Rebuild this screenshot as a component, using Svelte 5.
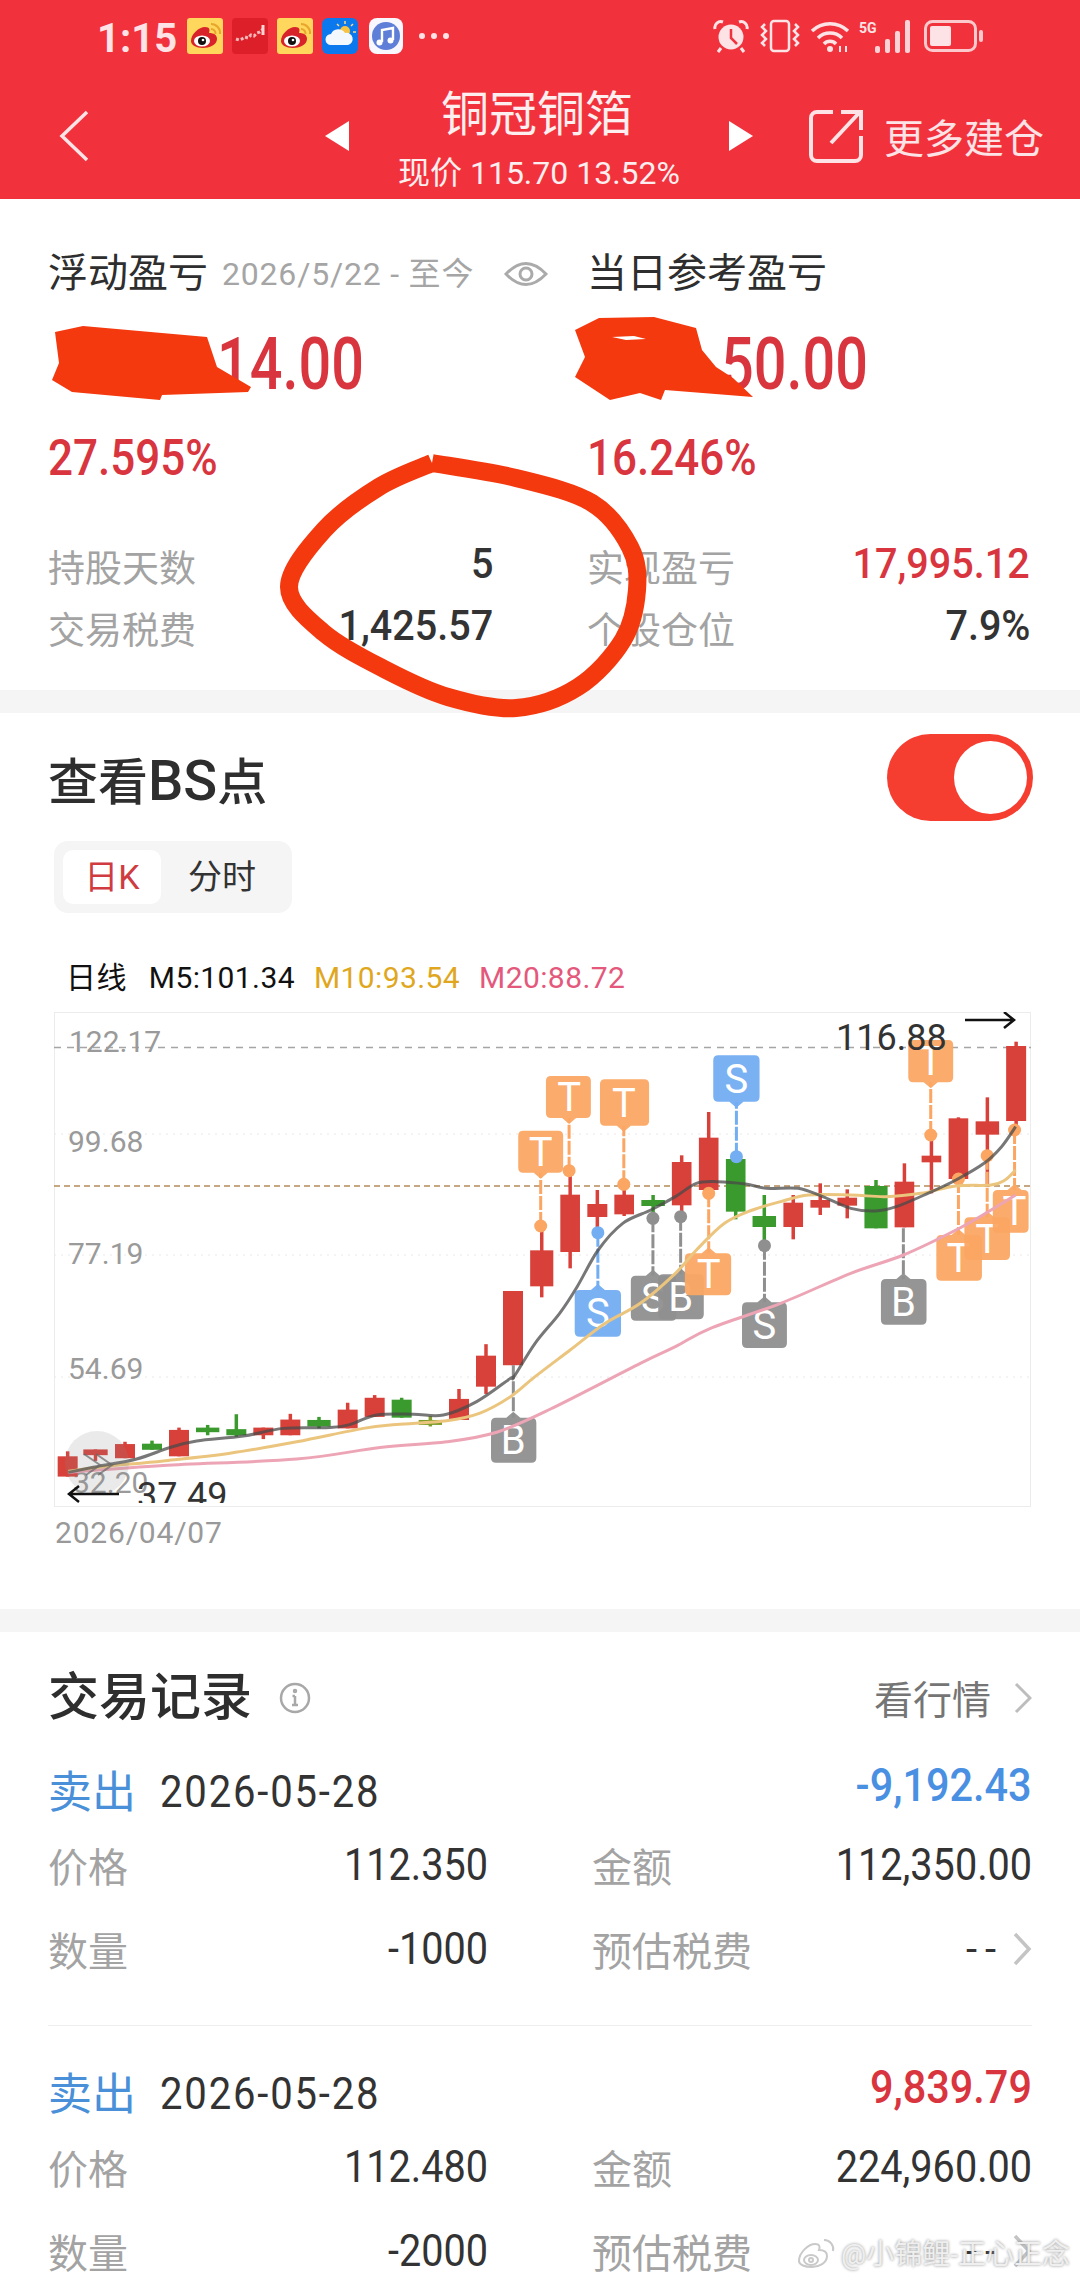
<script>
  // crop-space helpers: candle positions were measured on two zoomed crops
  const ax = (v) => 30 + v / 3;
  const ay = (v) => 950 + v / 2.613;
  const bx = (v) => 500 + v / 2.851;
  const by = (v) => 980 + v / 3;

  const RED = "#d8403a";
  const GREEN = "#3b9a2e";

  // [left, right, top, bottom, wickTop, wickBottom, colour]
  const leftCandles = [
    [83, 143, 1323, 1376, 1310, 1376, RED],
    [160, 233, 1305, 1320, 1305, 1335, RED],
    [255, 315, 1291, 1328, 1285, 1328, RED],
    [336, 396, 1290, 1306, 1282, 1306, GREEN],
    [417, 477, 1254, 1323, 1248, 1323, RED],
    [498, 568, 1248, 1260, 1241, 1268, GREEN],
    [589, 649, 1252, 1268, 1213, 1272, GREEN],
    [670, 730, 1248, 1268, 1248, 1278, RED],
    [751, 811, 1227, 1268, 1212, 1268, RED],
    [832, 902, 1228, 1245, 1220, 1250, GREEN],
    [923, 983, 1201, 1250, 1183, 1250, RED],
    [1004, 1064, 1170, 1220, 1163, 1220, RED],
    [1085, 1145, 1175, 1222, 1170, 1222, GREEN],
    [1166, 1236, 1228, 1241, 1218, 1245, "#7f9e2c"],
    [1257, 1317, 1173, 1228, 1147, 1228, RED],
    [1338, 1398, 1060, 1141, 1030, 1160, RED],
    [1419, 1479, 891, 1085, 891, 1085, RED],
  ].map((c) => ({ x1: ax(c[0]), x2: ax(c[1]), y1: ay(c[2]), y2: ay(c[3]), w1: ay(c[4]), w2: ay(c[5]), color: c[6] }));

  const rightCandles = [
    [86, 152, 811, 919, 740, 952, RED],
    [172, 228, 644, 816, 580, 865, RED],
    [249, 306, 672, 711, 630, 750, RED],
    [326, 382, 644, 703, 630, 708, RED],
    [403, 470, 660, 678, 645, 700, GREEN],
    [490, 546, 546, 676, 526, 700, RED],
    [567, 623, 473, 630, 396, 650, RED],
    [644, 700, 537, 695, 530, 718, GREEN],
    [720, 787, 708, 741, 645, 790, GREEN],
    [808, 864, 668, 741, 645, 778, RED],
    [885, 941, 660, 683, 610, 705, RED],
    [962, 1018, 653, 677, 628, 715, RED],
    [1039, 1105, 618, 745, 600, 745, GREEN],
    [1125, 1181, 605, 742, 550, 742, RED],
    [1202, 1258, 527, 547, 470, 640, RED],
    [1279, 1335, 415, 597, 412, 597, RED],
    [1356, 1423, 424, 464, 352, 620, RED],
    [1443, 1500, 198, 423, 185, 440, RED],
  ].map((c) => ({ x1: bx(c[0]), x2: bx(c[1]), y1: by(c[2]), y2: by(c[3]), w1: by(c[4]), w2: by(c[5]), color: c[6] }));

  const candles = [...leftCandles, ...rightCandles];

  const ORANGE = "#fba663";
  const BLUE = "#73adf2";
  const GRAY = "#8f8f8f";

  // [left, right, top, bottom, letter, colour, stemX, stemEndY, hasDot]
  const markers = [
    [52, 180, 452, 578, "T", ORANGE, 116, 738, true],
    [131, 259, 288, 414, "T", ORANGE, 197, 572, true],
    [285, 425, 298, 437, "T", ORANGE, 353, 613, true],
    [608, 740, 226, 365, "S", BLUE, 674, 530, true],
    [213, 345, 930, 1070, "S", BLUE, 279, 758, true],
    [373, 503, 887, 1022, "S", GRAY, 436, 715, true],
    [451, 581, 883, 1018, "B", GRAY, 515, 710, true],
    [527, 659, 820, 946, "T", ORANGE, 595, 640, true],
    [690, 818, 967, 1104, "S", GRAY, 754, 797, true],
    [1086, 1216, 897, 1034, "B", GRAY, 1150, 745, false],
    [1164, 1292, 180, 307, "T", ORANGE, 1228, 465, true],
    [1244, 1374, 765, 902, "T", ORANGE, 1307, 597, true],
    [1324, 1454, 712, 840, "T", ORANGE, 1389, 527, true],
    [1405, 1507, 630, 758, "T", ORANGE, 1467, 450, true],
  ].map((m) => ({
    x1: bx(m[0]), x2: bx(m[1]), y1: by(m[2]), y2: by(m[3]), letter: m[4], color: m[5],
    sx: bx(m[6]), sy: by(m[7]), dot: m[8],
  }));
  // the first B sits on the left crop
  markers.push({ x1: ax(1383), x2: ax(1519), y1: ay(1222), y2: ay(1340), letter: "B", color: GRAY, sx: ax(1450), sy: ay(1085), dot: false });

  function bubble(m) {
    const r = 5;
    const up = m.sy < m.y1; // tip points at the candle
    const top = up ? `L${m.sx - 7} ${m.y1} L${m.sx} ${m.y1 - 6} L${m.sx + 7} ${m.y1} ` : "";
    const bottom = up ? "" : `L${m.sx + 7} ${m.y2} L${m.sx} ${m.y2 + 6} L${m.sx - 7} ${m.y2} `;
    return `M${m.x1 + r} ${m.y1} ${top}L${m.x2 - r} ${m.y1} Q${m.x2} ${m.y1} ${m.x2} ${m.y1 + r} L${m.x2} ${m.y2 - r} Q${m.x2} ${m.y2} ${m.x2 - r} ${m.y2} ` +
      `${bottom}L${m.x1 + r} ${m.y2} Q${m.x1} ${m.y2} ${m.x1} ${m.y2 - r} L${m.x1} ${m.y1 + r} Q${m.x1} ${m.y1} ${m.x1 + r} ${m.y1} Z`;
  }

  function smooth(pts) {
    let d = `M${pts[0][0]} ${pts[0][1]}`;
    for (let i = 0; i < pts.length - 1; i++) {
      const p0 = pts[i - 1] || pts[i];
      const p1 = pts[i];
      const p2 = pts[i + 1];
      const p3 = pts[i + 2] || p2;
      d += ` C${p1[0] + (p2[0] - p0[0]) / 6} ${p1[1] + (p2[1] - p0[1]) / 6} ${p2[0] - (p3[0] - p1[0]) / 6} ${p2[1] - (p3[1] - p1[1]) / 6} ${p2[0]} ${p2[1]}`;
    }
    return d;
  }

  const fromA = (list) => list.map(([x, y]) => [ax(x), ay(y)]);
  const fromB = (list) => list.map(([x, y]) => [bx(x), by(y)]);

  const ma5 = smooth([
    ...fromA([[115, 1365], [200, 1350], [320, 1330], [420, 1300], [500, 1283], [640, 1270], [760, 1250], [900, 1248], [960, 1240], [1040, 1215], [1150, 1213], [1240, 1215], [1340, 1180], [1440, 1120]]),
    ...fromB([[40, 1190], [100, 1090], [170, 1000], [220, 920], [280, 810], [350, 730], [430, 690], [500, 650], [560, 610], [620, 605], [700, 612], [760, 625], [850, 625], [920, 650], [1000, 685], [1070, 693], [1130, 680], [1220, 640], [1300, 600], [1380, 550], [1430, 500], [1470, 440]]),
  ]);
  const ma10 = smooth([
    ...fromA([[115, 1362], [220, 1350], [400, 1335], [600, 1315], [800, 1285], [1000, 1250], [1100, 1240], [1250, 1230], [1350, 1210]]),
    ...fromB([[30, 1250], [100, 1190], [200, 1110], [300, 1030], [400, 970], [500, 880], [560, 810], [640, 730], [720, 690], [800, 665], [880, 645], [1000, 645], [1100, 650], [1200, 640], [1300, 618], [1400, 615], [1440, 600], [1470, 570]]),
  ]);
  const ma20 = smooth([
    ...fromA([[115, 1365], [400, 1347], [800, 1330], [1050, 1300], [1250, 1285], [1400, 1260], [1560, 1200]]),
    ...fromB([[400, 1150], [500, 1100], [600, 1045], [800, 970], [1000, 880], [1150, 825], [1300, 750], [1400, 690], [1470, 645]]),
  ]);

  const gridLines = [1134, 1255, 1377];
  const axisLabels = [
    { text: "99.68", x: 68, y: 1152 },
    { text: "77.19", x: 68, y: 1264 },
    { text: "54.69", x: 68, y: 1379 },
  ];

  const ring = smooth([[432, 463], [516, 478], [592, 503], [630, 547], [637, 590], [623, 640], [578, 687], [516, 708], [448, 697], [386, 670], [324, 633], [289, 587], [324, 530], [379, 487], [432, 463]]);

  const trades = [
    { date: "2026-05-28", pnl: "-9,192.43", pnlClass: "down", price: "112.350", amount: "112,350.00", qty: "-1000" },
    { date: "2026-05-28", pnl: "9,839.79", pnlClass: "up", price: "112.480", amount: "224,960.00", qty: "-2000" },
  ];
</script>

{#snippet weibo()}
  <svg class="app" viewBox="0 0 36 36">
    <rect width="36" height="36" rx="3" fill="#ffd75c" />
    <path d="M24 6a9 9 0 0 1 9 10M24 11a4.500 4.500 0 0 1 4.500 5" fill="none" stroke="#e9a62c" stroke-width="2" />
    <path d="M4 23c0-7 8-14 14-14 5 0 5 3 4 6 5 0 8 2 8 6 0 6-8 9-14 9-7 0-12-3-12-7z" fill="#d8232a" />
    <ellipse cx="15" cy="23" rx="8" ry="5.500" fill="#fff" />
    <circle cx="15" cy="23" r="4" fill="#111" />
    <circle cx="16" cy="22" r="1.300" fill="#fff" />
  </svg>
{/snippet}

<div class="page">
  <header class="head">
    <div class="status">
      <span class="time">1:15</span>
      {@render weibo()}
      <svg class="app" viewBox="0 0 36 36">
        <rect width="36" height="36" rx="4" fill="#dc1f28" />
        <path d="M4 21l3 1 3-1 3-2 3 1 3-3 3 1 3-3 3-1 3-3" fill="none" stroke="#f5b9bb" stroke-width="3" stroke-dasharray="3 2" />
        <path d="M31 7v10" stroke="#f8d4d5" stroke-width="3" />
      </svg>
      {@render weibo()}
      <svg class="app" viewBox="0 0 36 36">
        <rect width="36" height="36" rx="6" fill="#0b78ee" />
        <circle cx="23" cy="13" r="5" fill="#f6c344" />
        <path d="M23 3v3M31 6l-2 2M34 14h-3M15 6l2 2" stroke="#f6d98a" stroke-width="1.500" />
        <path d="M9 27a5.500 5.500 0 0 1 0-11 8 8 0 0 1 14-1 6 6 0 0 1 3 12z" fill="#f3f8ff" />
      </svg>
      <svg class="app music" viewBox="0 0 34 36">
        <rect width="34" height="36" rx="8" fill="#f7f7fd" />
        <circle cx="17" cy="18" r="14" fill="#5f7ed8" />
        <path d="M13 24V12l11-2v12" fill="none" stroke="#fff" stroke-width="2.400" />
        <circle cx="10.500" cy="24.500" r="3" fill="#fff" />
        <circle cx="21.500" cy="22.500" r="3" fill="#fff" />
      </svg>
      <span class="dots"><i></i><i></i><i></i></span>

      <span class="status-right">
        <svg width="36" height="35" viewBox="0 0 36 35" fill="none" stroke="#fde3e5">
          <circle cx="18" cy="18" r="12.500" fill="#fde3e5" stroke="none" />
          <path d="M18 10v9l6 6" stroke="#f1323d" stroke-width="2.500" />
          <path d="M2 10a6 6 0 0 1 8-7M34 10a6 6 0 0 0-8-7M8 29l-3 4M28 29l3 4" stroke-width="3" />
        </svg>
        <svg class="vib" width="40" height="34" viewBox="0 0 40 34" fill="none" stroke="#fde3e5" stroke-width="2.500">
          <rect x="11" y="2" width="18" height="30" rx="3" />
          <path d="M5 5l-3 3 4 4-4 4 4 4-4 4 3 3M35 5l3 3-4 4 4 4-4 4 4 4-3 3" />
        </svg>
        <svg class="wifi" width="40" height="33" viewBox="0 0 40 33" fill="none" stroke="#fde3e5" stroke-width="3.500">
          <path d="M2 11a26 26 0 0 1 36 0M8 18a17 17 0 0 1 24 0M14 24a8 8 0 0 1 12 0" />
          <circle cx="20" cy="29" r="3" fill="#fde3e5" stroke="none" />
          <path d="M30 32v-6M36 26v6" stroke-width="2" />
        </svg>
        <span class="signal">
          <b>5G</b>
          <i style="height: 7px"></i><i style="height: 14px"></i><i style="height: 22px"></i><i style="height: 33px"></i>
        </span>
        <svg class="batt" width="59" height="32" viewBox="0 0 59 32">
          <rect x="1.500" y="1.500" width="50" height="29" rx="7" fill="none" stroke="#fbc9cc" stroke-width="3" />
          <rect x="6" y="6" width="21" height="20" rx="2" fill="#fde3e5" />
          <rect x="55" y="10" width="4" height="12" rx="2" fill="#fbc9cc" />
        </svg>
      </span>
    </div>

    <nav class="nav">
      <svg class="back" width="30" height="52" viewBox="0 0 30 52" fill="none" stroke="#fde3e5" stroke-width="3.500">
        <path d="M28 2L3 26l25 24" />
      </svg>
      <svg class="tri" width="24" height="30" viewBox="0 0 24 30"><path d="M24 0v30L0 15z" fill="#fff" /></svg>
      <div class="stock">
        <div class="stock-name">铜冠铜箔</div>
        <div class="stock-price">现价 115.70 13.52%</div>
      </div>
      <svg class="tri" width="24" height="30" viewBox="0 0 24 30"><path d="M0 0v30l24-15z" fill="#fff" /></svg>
      <svg class="share" width="54" height="54" viewBox="0 0 54 54" fill="none" stroke="#fde3e5" stroke-width="4">
        <path d="M24 3H8a6 6 0 0 0-6 6v37a6 6 0 0 0 6 6h38a6 6 0 0 0 6-6V27" />
        <path d="M22 34L50 4M32 3h20v18" />
      </svg>
      <span class="more">更多建仓</span>
    </nav>
  </header>

  <section class="pnl">
    <div class="col">
      <div class="pnl-label">
        <span>浮动盈亏</span>
        <small>2026/5/22 - 至今</small>
        <svg class="eye" width="44" height="30" viewBox="0 0 44 30" fill="none" stroke="#aaa" stroke-width="3">
          <path d="M2 15Q22-6 42 15 22 36 2 15z" />
          <circle cx="22" cy="15" r="6" />
        </svg>
      </div>
      <div class="big">14.00</div>
      <div class="pct">27.595%</div>
      <div class="stat"><span>持股天数</span><b>5</b></div>
      <div class="stat"><span>交易税费</span><b>1,425.57</b></div>
    </div>
    <div class="col">
      <div class="pnl-label"><span>当日参考盈亏</span></div>
      <div class="big">50.00</div>
      <div class="pct">16.246%</div>
      <div class="stat"><span>实现盈亏</span><b class="red">17,995.12</b></div>
      <div class="stat"><span>个股仓位</span><b>7.9%</b></div>
    </div>
  </section>

  <div class="band"></div>

  <section class="bs">
    <div class="bs-top">
      <h2>查看<span>BS</span>点</h2>
      <div class="toggle"><i></i></div>
    </div>
    <div class="tabs">
      <span class="tab on">日K</span>
      <span class="tab">分时</span>
    </div>
    <div class="legend">
      <span class="ri">日线</span>
      <span>M5:101.34</span>
      <span class="m10">M10:93.54</span>
      <span class="m20">M20:88.72</span>
    </div>

    <svg class="chart" width="977" height="495" viewBox="54 1012 977 495">
      <defs>
        <clipPath id="plot"><rect x="54" y="1012" width="977" height="491" /></clipPath>
      </defs>
      <rect x="54.500" y="1012.500" width="976" height="494" fill="#fff" stroke="#ececec" />
      {#each gridLines as y}
        <line x1="54" x2="1031" y1={y} y2={y} stroke="#e8e8e8" stroke-dasharray="2 5" />
      {/each}
      <line x1="54" x2="1031" y1="1047.500" y2="1047.500" stroke="#a5a5a5" stroke-width="1.500" stroke-dasharray="7 6" />
      <line x1="54" x2="1031" y1="1186" y2="1186" stroke="#b58a58" stroke-width="1.500" stroke-dasharray="6 4" />

      <text class="axis" x="69" y="1052">122.17</text>
      {#each axisLabels as l}
        <text class="axis" x={l.x} y={l.y}>{l.text}</text>
      {/each}

      <g clip-path="url(#plot)">
        <text class="axis" x="73" y="1493">32.20</text>
        {#each candles as c}
          <line x1={(c.x1 + c.x2) / 2} x2={(c.x1 + c.x2) / 2} y1={c.w1} y2={c.w2} stroke={c.color} stroke-width="3.500" />
          <rect x={c.x1} y={c.y1} width={c.x2 - c.x1} height={c.y2 - c.y1} fill={c.color} />
        {/each}

        {#each markers as m}
          <line x1={m.sx} x2={m.sx} y1={m.sy} y2={m.sy < m.y1 ? m.y1 : m.y2} stroke={m.color} stroke-width="3" stroke-dasharray="14 2" />
          {#if m.dot}
            <circle cx={m.sx} cy={m.sy} r="6.500" fill={m.color} />
          {/if}
        {/each}
        {#each markers as m}
          <path d={bubble(m)} fill={m.color} opacity="0.95" />
          <text class="letter" x={m.sx} y={(m.y1 + m.y2) / 2 + 14}>{m.letter}</text>
        {/each}

        <path d={ma20} fill="none" stroke="#eda4b5" stroke-width="3" />
        <path d={ma10} fill="none" stroke="#ebc57d" stroke-width="3" />
        <path d={ma5} fill="none" stroke="#4a4a4a" stroke-width="3" opacity="0.75" />

        <circle cx="97" cy="1463" r="32" fill="#8c8c8c" opacity="0.18" />
        <path d="M84 1454l16 11-14 10M96 1454l16 11-14 10" fill="none" stroke="#666" stroke-width="2" opacity="0.7" />

        <text class="tip" x="137" y="1508">37.49</text>
        <path d="M119 1494H69M79 1486l-10 8 10 8" fill="none" stroke="#111" stroke-width="2.500" />

        <text class="tip" x="836" y="1050">116.88</text>
        <path d="M965 1020H1014M1004 1012l10 8-10 8" fill="none" stroke="#111" stroke-width="2.500" />
      </g>
    </svg>
    <div class="chart-date">2026/04/07</div>
  </section>

  <div class="band"></div>

  <section class="records">
    <div class="rec-top">
      <h2>交易记录</h2>
      <svg class="info" width="32" height="32" viewBox="0 0 32 32" fill="none" stroke="#a8a8a8" stroke-width="2.500">
        <circle cx="16" cy="16" r="14" />
        <path d="M16 14v9M13.500 14H16M13 23h6" />
        <circle cx="16" cy="9" r="1" />
      </svg>
      <span class="quote">看行情</span>
      <svg class="chev" width="18" height="32" viewBox="0 0 18 32" fill="none" stroke="#bdbdbd" stroke-width="3">
        <path d="M2 2l14 14L2 30" />
      </svg>
    </div>

    {#each trades as t, i}
      {#if i > 0}<hr />{/if}
      <div class="trade-head">
        <span class="side">卖出</span>
        <span class="date">{t.date}</span>
        <span class="pnl-val {t.pnlClass}">{t.pnl}</span>
      </div>
      <div class="cells first">
        <div class="cell"><span>价格</span><b>{t.price}</b></div>
        <div class="cell"><span>金额</span><b>{t.amount}</b></div>
      </div>
      <div class="cells second">
        <div class="cell"><span>数量</span><b>{t.qty}</b></div>
        <div class="cell">
          <span>预估税费</span>
          <b class="none">--</b>
          <svg class="chev" width="20" height="34" viewBox="0 0 20 34" fill="none" stroke="#c4c4c4" stroke-width="3.500">
            <path d="M3 2l14 15L3 32" />
          </svg>
        </div>
      </div>
    {/each}
  </section>

  <!-- hand drawn marks on top of the screenshot -->
  <svg class="marks" width="1080" height="2280" viewBox="0 0 1080 2280">
    <path d="M55 332L83 326 207 337 217 367 251 387 248 392 162 395 160 400 72 392 52 380 59 363z" />
    <path d="M575 330L599 318 654 317 696 328 702 350 716 367 733 378 753 397 665 390 661 400 640 393 610 400 575 377 585 357z" />
    <path d="M612 337l22-1 12 3-20 1z" fill="#fff" />
    <path d={ring} class="ring" />
  </svg>

  <div class="mark">
    <svg width="42" height="36" viewBox="0 0 42 36" fill="none" stroke="#c9c9c9" stroke-width="2">
      <path d="M3 24c0-9 10-17 16-17 5 0 5 3 4 6 5 0 8 2 8 6 0 7-8 11-15 11C9 30 3 28 3 24z" fill="#fff" />
      <ellipse cx="15" cy="23" rx="7" ry="5" />
      <circle cx="15" cy="23" r="2" />
      <path d="M28 3a9 9 0 0 1 9 11" />
    </svg>
    <span>@小锦鲤-正心正念</span>
  </div>
</div>

<style>
  :global(body) {
    margin: 0;
    background: #fff;
  }
  .page {
    position: relative;
    width: 1080px;
    height: 2280px;
    overflow: hidden;
    background: #fff;
    color: #333;
    font-family: Roboto, "Noto Sans CJK SC", sans-serif;
  }
  h2 {
    margin: 0;
    font-weight: 500;
    color: #2e2e2e;
  }

  /* header */
  .head {
    height: 199px;
    box-sizing: border-box;
    background: #f1323d;
    color: #fff;
  }
  .status {
    display: flex;
    align-items: center;
    height: 72px;
    padding-left: 97px;
  }
  .time {
    width: 80px;
    margin-right: 10px;
    padding-top: 6px;
    font-size: 40px;
    font-weight: 700;
    color: #fde3e5;
    line-height: 66px;
    white-space: nowrap;
  }
  .app {
    flex: none;
    width: 36px;
    height: 36px;
    margin-right: 9px;
  }
  .app.music {
    width: 34px;
    margin-left: 2px;
  }
  .dots {
    display: flex;
    gap: 6px;
    margin-left: 7px;
  }
  .dots i {
    width: 6px;
    height: 6px;
    border-radius: 50%;
    background: #fde3e5;
  }
  .status-right {
    display: flex;
    align-items: center;
    margin-left: auto;
    margin-right: 97px;
  }
  .vib {
    margin-left: 11px;
  }
  .wifi {
    margin-left: 10px;
  }
  .signal {
    position: relative;
    display: flex;
    align-items: flex-end;
    gap: 5px;
    height: 33px;
    margin-left: 9px;
    padding-left: 16px;
    width: 36px;
    margin-right: 13px;
  }
  .signal b {
    position: absolute;
    left: 0;
    top: 1px;
    font-size: 14px;
    line-height: 14px;
    color: #fde3e5;
  }
  .signal i {
    flex: none;
    width: 5px;
    border-radius: 2px;
    background: #fbd3d6;
  }
  .nav {
    display: flex;
    align-items: center;
    height: 127px;
    padding-left: 58px;
  }
  .back {
    margin-left: 1px;
  }
  .tri {
    flex: none;
  }
  .back + .tri {
    margin-left: 236px;
  }
  .stock {
    width: 380px;
    margin-top: 8px;
    text-align: center;
  }
  .stock-name {
    font-size: 48px;
    line-height: 60px;
    margin-top: -4px;
    margin-right: 4px;
    color: #fdeeef;
  }
  .stock-price {
    font-size: 32px;
    line-height: 36px;
    margin-top: 10px;
    color: #fdeeef;
    white-space: nowrap;
  }
  .share {
    flex: none;
    margin-left: 56px;
  }
  .more {
    margin-left: 21px;
    font-size: 40px;
    white-space: nowrap;
    color: #fde3e5;
  }

  /* pnl */
  .pnl {
    display: grid;
    grid-template-columns: 445px 443px;
    column-gap: 94px;
    height: 491px;
    box-sizing: border-box;
    padding: 55px 0 0 48px;
  }
  .pnl-label {
    display: flex;
    align-items: center;
    height: 40px;
    font-size: 40px;
    line-height: 40px;
    color: #2e2e2e;
    white-space: nowrap;
  }
  .pnl-label small {
    margin-left: 14px;
    font-size: 32px;
    letter-spacing: 0.8px;
    color: #a5a5a5;
  }
  .eye {
    flex: none;
    margin-left: 30px;
  }
  .big {
    width: 316px;
    margin-top: 35px;
    margin-bottom: -3px;
    font-size: 72px;
    line-height: 72px;
    font-weight: 500;
    text-align: right;
    color: #d9353f;
    transform: scaleX(0.8);
    transform-origin: right center;
  }
  .col + .col .big {
    width: 281px;
  }
  .pct {
    margin-top: 35px;
    font-size: 50px;
    line-height: 50px;
    font-weight: 500;
    color: #d9353f;
    transform: scaleX(0.88);
    transform-origin: left center;
  }
  .stat {
    display: flex;
    justify-content: space-between;
    align-items: flex-start;
    height: 50px;
    margin-top: 12px;
    font-size: 37px;
    line-height: 50px;
  }
  .pct + .stat {
    margin-top: 58px;
  }
  .stat span {
    padding-top: 4px;
    color: #a3a3a3;
  }
  .stat b {
    margin-top: -3px;
    font-size: 43px;
    font-weight: 500;
    color: #333;
    transform: scaleX(0.92);
    transform-origin: right center;
  }
  .stat b.red {
    color: #d9353f;
  }

  .band {
    height: 23px;
    background: #f5f5f5;
  }

  /* bs chart */
  .bs {
    height: 896px;
    box-sizing: border-box;
    padding-top: 21px;
  }
  .bs-top {
    display: flex;
    justify-content: space-between;
    align-items: center;
    padding: 0 47px 0 48px;
  }
  .bs-top h2 {
    font-size: 50px;
  }
  .bs-top h2 span {
    font-size: 56px;
  }
  .toggle {
    position: relative;
    width: 146px;
    height: 87px;
    border-radius: 44px;
    background: #f53d30;
  }
  .toggle i {
    position: absolute;
    top: 7px;
    right: 6px;
    width: 73px;
    height: 73px;
    border-radius: 50%;
    background: #fff;
  }
  .tabs {
    display: flex;
    align-items: center;
    width: 238px;
    height: 72px;
    box-sizing: border-box;
    margin: 20px 0 0 54px;
    padding: 0 9px;
    border-radius: 14px;
    background: #f5f5f5;
  }
  .tab {
    width: 98px;
    height: 54px;
    border-radius: 10px;
    font-size: 34px;
    line-height: 54px;
    text-align: center;
    color: #333;
  }
  .tab + .tab {
    width: 122px;
  }
  .tab.on {
    background: #fff;
    color: #cf3b40;
  }
  .legend {
    display: flex;
    gap: 19px;
    height: 40px;
    margin-top: 45px;
    padding-left: 66px;
    font-size: 30px;
    line-height: 40px;
    color: #111;
    letter-spacing: 0.4px;
  }
  .ri {
    margin-right: 3px;
  }
  .m10 {
    color: #e0a71e;
  }
  .m20 {
    color: #e4587c;
  }
  .chart {
    display: block;
    margin: 14px 0 0 54px;
  }
  .axis {
    font-size: 30px;
    fill: #9a9a9a;
  }
  .letter {
    font-size: 40px;
    fill: #fff;
    text-anchor: middle;
  }
  .tip {
    font-size: 36px;
    fill: #333;
  }
  .chart-date {
    margin: 8px 0 0 55px;
    font-size: 30px;
    line-height: 36px;
    letter-spacing: 0.8px;
    color: #999;
  }

  /* trade records */
  .records {
    padding: 36px 48px 0;
  }
  .rec-top {
    display: flex;
    align-items: center;
    height: 60px;
  }
  .rec-top h2 {
    font-size: 51px;
    line-height: 60px;
  }
  .info {
    margin-left: 27px;
  }
  .quote {
    margin-left: auto;
    margin-top: -3px;
    font-size: 39px;
    color: #757575;
  }
  .rec-top .chev {
    margin-left: 23px;
  }
  .trade-head {
    display: flex;
    align-items: center;
    height: 60px;
    margin-top: 32px;
  }
  hr + .trade-head {
    margin-top: 36px;
  }
  hr {
    height: 1px;
    margin: 46px 0 0;
    border: 0;
    background: #eee;
  }
  .side {
    margin-top: -3px;
    font-size: 44px;
    color: #4a90d9;
  }
  .date {
    margin-left: 24px;
    margin-top: 3px;
    font-size: 44px;
    letter-spacing: 2px;
    color: #333;
    transform: scaleX(0.91);
    transform-origin: left center;
  }
  .pnl-val {
    margin-left: auto;
    margin-top: -10px;
    font-size: 46px;
    font-weight: 500;
    transform: scaleX(0.9);
    transform-origin: right center;
  }
  .pnl-val.down {
    color: #4a90e2;
  }
  .pnl-val.up {
    color: #d9353f;
  }
  .cells {
    display: grid;
    grid-template-columns: 440px 440px;
    column-gap: 104px;
    height: 60px;
    margin-top: 15px;
  }
  .cells.second {
    margin-top: 24px;
  }
  .cell {
    display: flex;
    align-items: center;
    height: 60px;
    font-size: 40px;
  }
  .cell span {
    color: #a3a3a3;
  }
  .cell b {
    margin-left: auto;
    font-size: 44px;
    font-weight: 400;
    color: #333;
    transform: scaleX(0.9);
    transform-origin: right center;
  }
  .cell b.none {
    font-size: 40px;
    letter-spacing: 8px;
    margin-right: 8px;
    transform: none;
  }
  .cell .chev {
    flex: none;
  }

  /* overlays */
  .marks {
    position: absolute;
    top: 0;
    left: 0;
    fill: #f4390f;
    pointer-events: none;
  }
  .ring {
    fill: none;
    stroke: #f4390f;
    stroke-width: 18;
    stroke-linejoin: round;
  }
  .mark {
    position: absolute;
    right: 10px;
    top: 2236px;
    display: flex;
    align-items: center;
    gap: 3px;
    font-size: 28px;
    line-height: 38px;
    color: #efefef;
    text-shadow: 0 0 3px #8a8a8a;
    white-space: nowrap;
  }
</style>
